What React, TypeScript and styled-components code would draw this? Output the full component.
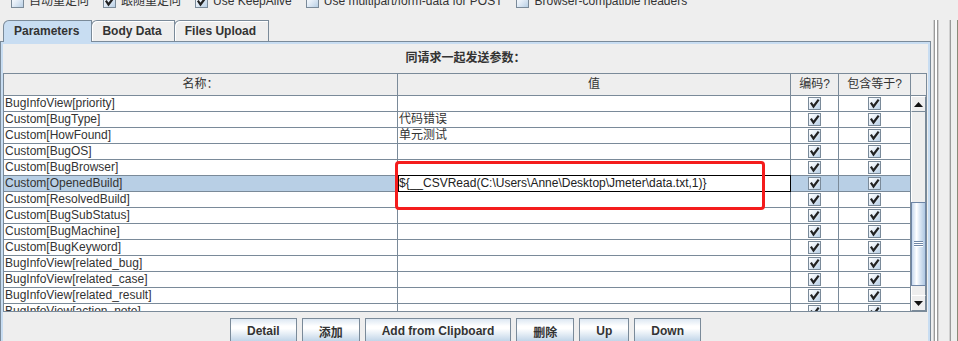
import React from 'react';
import styled, { createGlobalStyle } from 'styled-components';

const GRID = '#7a8a99';
const LIGHT_BLUE = '#c8ddf2';
const SEL = '#b8cfe5';
const FONT = '"Liberation Sans", Arial, "Noto Sans CJK SC", sans-serif';

const Global = createGlobalStyle`
  html, body { margin: 0; padding: 0; background: #eeeeee; }
  body { font-family: ${FONT}; font-size: 12px; color: #333333; }
  * { box-sizing: border-box; }
`;

const Page = styled.div`
  position: relative;
  width: 958px;
  height: 341px;
  overflow: hidden;
  background: #eeeeee;
  display: flex;
  flex-direction: column;
`;

const OptionsBar = styled.div`
  height: 8px;
  overflow: hidden;
  display: flex;
  align-items: flex-end;
  gap: 14px;
  padding-left: 11px;
`;

const Option = styled.label`
  display: flex;
  align-items: center;
  gap: 5px;
  height: 13px;
  line-height: 13px;
  white-space: nowrap;
`;

const Spacer = styled.div<{ $h: number }>`
  height: ${(p) => p.$h}px;
  flex: none;
`;

const Main = styled.div`
  display: flex;
  flex: 1;
  min-height: 0;
`;

const LeftCol = styled.div`
  width: 931px;
  flex: none;
  display: flex;
  flex-direction: column;
`;

const TabStrip = styled.div`
  height: 21px;
  display: flex;
  align-items: flex-end;
  padding-left: 3px;
`;

const Tab = styled.div<{ $active?: boolean }>`
  position: relative;
  z-index: ${(p) => (p.$active ? 2 : 1)};
  height: ${(p) => (p.$active ? 22 : 21)}px;
  margin-bottom: ${(p) => (p.$active ? -1 : 0)}px;
  margin-left: -1px;
  &:first-child { margin-left: 0; }
  padding: 0 12px 0 10px;
  border: 1px solid ${GRID};
  border-bottom: none;
  border-top-left-radius: 6px;
  background: ${(p) => (p.$active ? LIGHT_BLUE : '#eeeeee')};
  box-shadow: ${(p) => (p.$active ? 'none' : 'inset 1px 1px 0 #ffffff')};
  font-weight: bold;
  font-size: 12px;
  line-height: 20px;
  color: #333333;
  white-space: nowrap;
`;

const Panel = styled.div`
  flex: 1;
  border: 1px solid ${GRID};
  border-bottom: none;
  padding: 2px 2px 0 2px;
  box-shadow: inset 2px 2px 0 ${LIGHT_BLUE}, inset -2px 0 0 ${LIGHT_BLUE};
  display: flex;
  flex-direction: column;
`;

const Title = styled.div`
  height: 29px;
  line-height: 29px;
  text-align: center;
  font-weight: bold;
  font-size: 12px;
  color: #333333;
`;

const TableBox = styled.div`
  width: 924px;
  border: 1px solid ${GRID};
  background: #ffffff;
  display: flex;
  flex-direction: column;
`;

const HeaderRow = styled.div`
  display: grid;
  grid-template-columns: 394px 393px 48px 72px 15px;
  height: 22px;
  border-bottom: 1px solid ${GRID};
  background: #eeeeee;
`;

const HeaderCell = styled.div<{ $last?: boolean }>`
  border-right: ${(p) => (p.$last ? 'none' : `1px solid ${GRID}`)};
  text-align: center;
  line-height: 21px;
  font-size: 12px;
  color: #333333;
  white-space: nowrap;
  overflow: hidden;
`;

const Body = styled.div`
  display: flex;
  height: 215px;
  overflow: hidden;
`;

const RowsGrid = styled.div`
  display: grid;
  grid-template-columns: 394px 393px 48px 72px;
  grid-auto-rows: 16px;
  align-content: start;
  width: 907px;
  flex: none;
`;

const Cell = styled.div<{ $sel?: boolean; $center?: boolean }>`
  border-right: 1px solid ${GRID};
  border-bottom: 1px solid ${GRID};
  background: ${(p) => (p.$sel ? SEL : '#ffffff')};
  padding-left: ${(p) => (p.$center ? 0 : 1)}px;
  line-height: 15px;
  font-size: 12px;
  color: #333333;
  white-space: nowrap;
  overflow: hidden;
  display: flex;
  align-items: center;
  justify-content: ${(p) => (p.$center ? 'center' : 'flex-start')};
`;

const EditorCell = styled.div`
  position: relative;
  z-index: 1;
  border-right: 1px solid #000000;
  border-bottom: 1px solid #000000;
  background: #ffffff;
  box-shadow: 0 -1px 0 #000000, inset 1px 0 0 #000000;
  padding-left: 1px;
  line-height: 15px;
  font-size: 12px;
  color: #222222;
  white-space: nowrap;
  overflow: hidden;
  display: flex;
  align-items: center;
`;

const CheckBox = styled.span`
  width: 13px;
  height: 13px;
  flex: none;
  display: inline-flex;
  align-items: center;
  justify-content: center;
  border: 1px solid ${GRID};
  background: linear-gradient(135deg, #ffffff 0%, #e4edf7 45%, #b8cfe5 100%);
`;

const ScrollBar = styled.div`
  width: 15px;
  flex: none;
  display: flex;
  flex-direction: column;
  background: #eeeeee;
`;

const ScrollButton = styled.div`
  height: 16px;
  flex: none;
  display: flex;
  align-items: center;
  justify-content: center;
  background: #eeeeee;
  border-top: 1px solid #ffffff;
  border-left: 1px solid #ffffff;
  border-right: 1px solid ${GRID};
  border-bottom: 1px solid ${GRID};
`;

const Track = styled.div`
  flex: 1;
  display: flex;
  flex-direction: column;
  background: #eeeeee;
  border-left: 1px solid #ffffff;
  border-right: 1px solid ${GRID};
`;

const Thumb = styled.div<{ $offset: number; $size: number }>`
  margin-top: ${(p) => p.$offset}px;
  height: ${(p) => p.$size}px;
  margin-left: -1px;
  margin-right: -1px;
  border: 1px solid #6f86a6;
  background: linear-gradient(to right, #c6d8ee 0%, #ffffff 35%, #dce8f5 60%, #b0c8e2 100%);
  display: flex;
  align-items: center;
  justify-content: center;
`;

const ButtonRow = styled.div`
  display: flex;
  justify-content: center;
  gap: 5px;
  margin-top: 6px;
`;

const Button = styled.button`
  height: 26px;
  padding: 0 16px;
  border: 1px solid ${GRID};
  border-radius: 0;
  background: linear-gradient(to bottom, #dde8f3 0%, #ffffff 30%, #ffffff 40%, #b8cfe5 100%);
  font-family: ${FONT};
  font-weight: bold;
  font-size: 12px;
  color: #333333;
  white-space: nowrap;
  cursor: pointer;
`;

const RightEdge = styled.div`
  flex: 1;
  display: flex;
`;

const EdgeLine = styled.div<{ $c: string; $w?: number }>`
  width: ${(p) => p.$w ?? 1}px;
  flex: none;
  background: ${(p) => p.$c};
`;

const Highlight = styled.div`
  position: absolute;
  left: 395px;
  top: 161px;
  width: 370px;
  height: 49px;
  border: 3px solid #f41c1c;
  border-radius: 4px;
  pointer-events: none;
  z-index: 5;
`;

const Check = () => (
  <svg width="11" height="11" viewBox="0 0 11 11">
    <polyline points="2.5,5.5 4.5,8.5 9,2.5" fill="none" stroke="#222" strokeWidth="2.2" strokeLinecap="square" />
  </svg>
);

const Box = ({ checked }: { checked?: boolean }) => <CheckBox>{checked ? <Check /> : null}</CheckBox>;

const Arrow = ({ up }: { up?: boolean }) => (
  <svg width="9" height="5" viewBox="0 0 9 5">
    <polygon points={up ? '0,5 9,5 4.5,0' : '0,0 9,0 4.5,5'} fill="#111" />
  </svg>
);

const Grip = () => (
  <svg width="9" height="6" viewBox="0 0 9 6">
    <rect x="0" y="0" width="9" height="1" fill="#6f86a6" />
    <rect x="0" y="2" width="9" height="1" fill="#6f86a6" />
    <rect x="0" y="4" width="9" height="1" fill="#6f86a6" />
    <rect x="0" y="1" width="9" height="1" fill="#ffffff" />
    <rect x="0" y="3" width="9" height="1" fill="#ffffff" />
    <rect x="0" y="5" width="9" height="1" fill="#ffffff" />
  </svg>
);

type Row = { name: string; value?: string; editing?: boolean };

const rows: Row[] = [
  { name: 'BugInfoView[priority]' },
  { name: 'Custom[BugType]', value: '代码错误' },
  { name: 'Custom[HowFound]', value: '单元测试' },
  { name: 'Custom[BugOS]' },
  { name: 'Custom[BugBrowser]' },
  { name: 'Custom[OpenedBuild]', value: '${__CSVRead(C:\\Users\\Anne\\Desktop\\Jmeter\\data.txt,1)}', editing: true },
  { name: 'Custom[ResolvedBuild]' },
  { name: 'Custom[BugSubStatus]' },
  { name: 'Custom[BugMachine]' },
  { name: 'Custom[BugKeyword]' },
  { name: 'BugInfoView[related_bug]' },
  { name: 'BugInfoView[related_case]' },
  { name: 'BugInfoView[related_result]' },
  { name: 'BugInfoView[action_note]' },
];

const options = [
  { label: '自动重定向', checked: false },
  { label: '跟随重定向', checked: true },
  { label: 'Use KeepAlive', checked: true },
  { label: 'Use multipart/form-data for POST', checked: false },
  { label: 'Browser-compatible headers', checked: false },
];

const buttons = ['Detail', '添加', 'Add from Clipboard', '删除', 'Up', 'Down'];

export default function App() {
  return (
    <Page>
      <Global />
      <OptionsBar>
        {options.map((o) => (
          <Option key={o.label}>
            <Box checked={o.checked} />
            {o.label}
          </Option>
        ))}
      </OptionsBar>
      <Spacer $h={12} />
      <Main>
        <LeftCol>
          <TabStrip>
            <Tab $active>Parameters</Tab>
            <Tab>Body Data</Tab>
            <Tab>Files Upload</Tab>
          </TabStrip>
          <Panel>
            <Title>同请求一起发送参数：</Title>
            <TableBox>
              <HeaderRow>
                <HeaderCell>名称：</HeaderCell>
                <HeaderCell>值</HeaderCell>
                <HeaderCell>编码?</HeaderCell>
                <HeaderCell>包含等于?</HeaderCell>
                <HeaderCell $last />
              </HeaderRow>
              <Body>
                <RowsGrid>
                  {rows.map((r) => (
                    <React.Fragment key={r.name}>
                      <Cell $sel={r.editing}>{r.name}</Cell>
                      {r.editing ? <EditorCell>{r.value}</EditorCell> : <Cell>{r.value ?? ''}</Cell>}
                      <Cell $sel={r.editing} $center>
                        <Box checked />
                      </Cell>
                      <Cell $sel={r.editing} $center>
                        <Box checked />
                      </Cell>
                    </React.Fragment>
                  ))}
                </RowsGrid>
                <ScrollBar>
                  <ScrollButton>
                    <Arrow up />
                  </ScrollButton>
                  <Track>
                    <Thumb $offset={90} $size={84}>
                      <Grip />
                    </Thumb>
                  </Track>
                  <ScrollButton>
                    <Arrow />
                  </ScrollButton>
                </ScrollBar>
              </Body>
            </TableBox>
            <ButtonRow>
              {buttons.map((b) => (
                <Button key={b}>{b}</Button>
              ))}
            </ButtonRow>
          </Panel>
        </LeftCol>
        <RightEdge>
          <EdgeLine $c="transparent" $w={2} />
          <EdgeLine $c="#d0d0d0" />
          <EdgeLine $c="#9a9a9a" />
          <EdgeLine $c="#ffffff" $w={2} />
          <EdgeLine $c="#9a9a9a" />
          <EdgeLine $c="#d0d0d0" />
          <EdgeLine $c="transparent" $w={10} />
          <EdgeLine $c="#d0d0d0" />
          <EdgeLine $c="#9a9a9a" />
          <EdgeLine $c="transparent" $w={6} />
          <EdgeLine $c="#8a8a78" />
        </RightEdge>
      </Main>
      <Highlight />
    </Page>
  );
}
